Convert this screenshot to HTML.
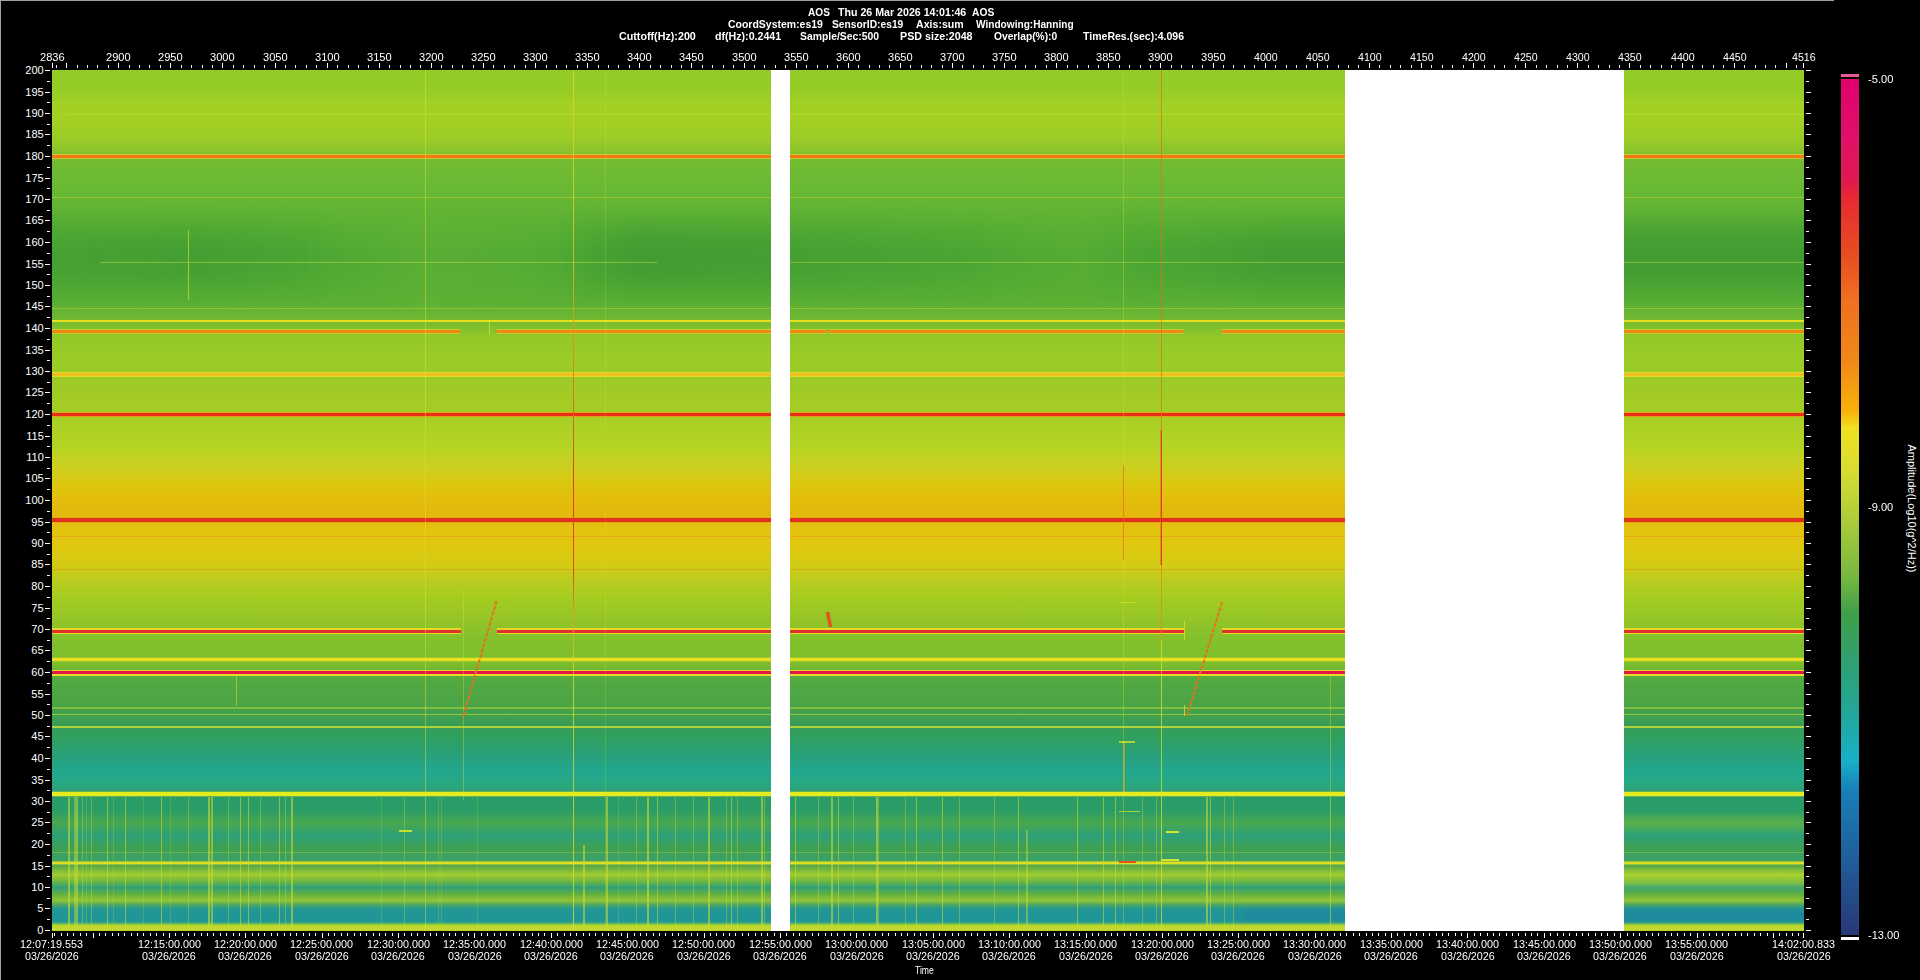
<!DOCTYPE html><html><head><meta charset="utf-8"><style>
*{margin:0;padding:0;box-sizing:border-box}
html,body{width:1920px;height:980px;background:#000;overflow:hidden}
body{position:relative;font-family:"Liberation Sans",sans-serif;color:#fff;font-size:11px}
.a{position:absolute}
.w{position:absolute;background:#fff}
.t{position:absolute;white-space:nowrap;line-height:11px;height:11px;transform-origin:0 0}
.b{font-weight:bold}
</style></head><body><div class="a" style="left:0;top:0;width:1834px;height:1px;background:#a0a0a0"></div>
<div class="a" style="left:0;top:0;width:1px;height:980px;background:#a0a0a0"></div>
<div class="t b" style="left:808.30px;top:7px;transform:scaleX(0.9167)">AOS</div>
<div class="t b" style="left:837.50px;top:7px;transform:scaleX(0.9667)">Thu 26 Mar 2026 14:01:46</div>
<div class="t b" style="left:971.90px;top:7px;transform:scaleX(0.9333)">AOS</div>
<div class="t b" style="left:728.00px;top:19px;transform:scaleX(0.9525)">CoordSystem:es19</div>
<div class="t b" style="left:832.00px;top:19px;transform:scaleX(0.9329)">SensorID:es19</div>
<div class="t b" style="left:916.00px;top:19px;transform:scaleX(0.9633)">Axis:sum</div>
<div class="t b" style="left:976.00px;top:19px;transform:scaleX(0.9189)">Windowing:Hanning</div>
<div class="t b" style="left:619.00px;top:31px;transform:scaleX(0.9747)">Cuttoff(Hz):200</div>
<div class="t b" style="left:715.00px;top:31px;transform:scaleX(0.9662)">df(Hz):0.2441</div>
<div class="t b" style="left:799.60px;top:31px;transform:scaleX(0.9440)">Sample/Sec:500</div>
<div class="t b" style="left:900.03px;top:31px;transform:scaleX(0.9726)">PSD size:2048</div>
<div class="t b" style="left:994.00px;top:31px;transform:scaleX(0.9309)">Overlap(%):0</div>
<div class="t b" style="left:1082.50px;top:31px;transform:scaleX(0.9571)">TimeRes.(sec):4.096</div>
<div class="w" style="left:56px;top:65px;width:1px;height:3px"></div>
<div class="w" style="left:66px;top:63px;width:1px;height:5px"></div>
<div class="w" style="left:77px;top:65px;width:1px;height:3px"></div>
<div class="w" style="left:87px;top:65px;width:1px;height:3px"></div>
<div class="w" style="left:97px;top:65px;width:1px;height:3px"></div>
<div class="w" style="left:108px;top:65px;width:1px;height:3px"></div>
<div class="w" style="left:118px;top:63px;width:1px;height:5px"></div>
<div class="w" style="left:129px;top:65px;width:1px;height:3px"></div>
<div class="w" style="left:139px;top:65px;width:1px;height:3px"></div>
<div class="w" style="left:149px;top:65px;width:1px;height:3px"></div>
<div class="w" style="left:160px;top:65px;width:1px;height:3px"></div>
<div class="w" style="left:170px;top:63px;width:1px;height:5px"></div>
<div class="w" style="left:181px;top:65px;width:1px;height:3px"></div>
<div class="w" style="left:191px;top:65px;width:1px;height:3px"></div>
<div class="w" style="left:202px;top:65px;width:1px;height:3px"></div>
<div class="w" style="left:212px;top:65px;width:1px;height:3px"></div>
<div class="w" style="left:222px;top:63px;width:1px;height:5px"></div>
<div class="w" style="left:233px;top:65px;width:1px;height:3px"></div>
<div class="w" style="left:243px;top:65px;width:1px;height:3px"></div>
<div class="w" style="left:254px;top:65px;width:1px;height:3px"></div>
<div class="w" style="left:264px;top:65px;width:1px;height:3px"></div>
<div class="w" style="left:275px;top:63px;width:1px;height:5px"></div>
<div class="w" style="left:285px;top:65px;width:1px;height:3px"></div>
<div class="w" style="left:295px;top:65px;width:1px;height:3px"></div>
<div class="w" style="left:306px;top:65px;width:1px;height:3px"></div>
<div class="w" style="left:316px;top:65px;width:1px;height:3px"></div>
<div class="w" style="left:327px;top:63px;width:1px;height:5px"></div>
<div class="w" style="left:337px;top:65px;width:1px;height:3px"></div>
<div class="w" style="left:348px;top:65px;width:1px;height:3px"></div>
<div class="w" style="left:358px;top:65px;width:1px;height:3px"></div>
<div class="w" style="left:368px;top:65px;width:1px;height:3px"></div>
<div class="w" style="left:379px;top:63px;width:1px;height:5px"></div>
<div class="w" style="left:389px;top:65px;width:1px;height:3px"></div>
<div class="w" style="left:400px;top:65px;width:1px;height:3px"></div>
<div class="w" style="left:410px;top:65px;width:1px;height:3px"></div>
<div class="w" style="left:420px;top:65px;width:1px;height:3px"></div>
<div class="w" style="left:431px;top:63px;width:1px;height:5px"></div>
<div class="w" style="left:441px;top:65px;width:1px;height:3px"></div>
<div class="w" style="left:452px;top:65px;width:1px;height:3px"></div>
<div class="w" style="left:462px;top:65px;width:1px;height:3px"></div>
<div class="w" style="left:473px;top:65px;width:1px;height:3px"></div>
<div class="w" style="left:483px;top:63px;width:1px;height:5px"></div>
<div class="w" style="left:493px;top:65px;width:1px;height:3px"></div>
<div class="w" style="left:504px;top:65px;width:1px;height:3px"></div>
<div class="w" style="left:514px;top:65px;width:1px;height:3px"></div>
<div class="w" style="left:525px;top:65px;width:1px;height:3px"></div>
<div class="w" style="left:535px;top:63px;width:1px;height:5px"></div>
<div class="w" style="left:546px;top:65px;width:1px;height:3px"></div>
<div class="w" style="left:556px;top:65px;width:1px;height:3px"></div>
<div class="w" style="left:566px;top:65px;width:1px;height:3px"></div>
<div class="w" style="left:577px;top:65px;width:1px;height:3px"></div>
<div class="w" style="left:587px;top:63px;width:1px;height:5px"></div>
<div class="w" style="left:598px;top:65px;width:1px;height:3px"></div>
<div class="w" style="left:608px;top:65px;width:1px;height:3px"></div>
<div class="w" style="left:618px;top:65px;width:1px;height:3px"></div>
<div class="w" style="left:629px;top:65px;width:1px;height:3px"></div>
<div class="w" style="left:639px;top:63px;width:1px;height:5px"></div>
<div class="w" style="left:650px;top:65px;width:1px;height:3px"></div>
<div class="w" style="left:660px;top:65px;width:1px;height:3px"></div>
<div class="w" style="left:671px;top:65px;width:1px;height:3px"></div>
<div class="w" style="left:681px;top:65px;width:1px;height:3px"></div>
<div class="w" style="left:691px;top:63px;width:1px;height:5px"></div>
<div class="w" style="left:702px;top:65px;width:1px;height:3px"></div>
<div class="w" style="left:712px;top:65px;width:1px;height:3px"></div>
<div class="w" style="left:723px;top:65px;width:1px;height:3px"></div>
<div class="w" style="left:733px;top:65px;width:1px;height:3px"></div>
<div class="w" style="left:744px;top:63px;width:1px;height:5px"></div>
<div class="w" style="left:754px;top:65px;width:1px;height:3px"></div>
<div class="w" style="left:764px;top:65px;width:1px;height:3px"></div>
<div class="w" style="left:775px;top:65px;width:1px;height:3px"></div>
<div class="w" style="left:785px;top:65px;width:1px;height:3px"></div>
<div class="w" style="left:796px;top:63px;width:1px;height:5px"></div>
<div class="w" style="left:806px;top:65px;width:1px;height:3px"></div>
<div class="w" style="left:817px;top:65px;width:1px;height:3px"></div>
<div class="w" style="left:827px;top:65px;width:1px;height:3px"></div>
<div class="w" style="left:837px;top:65px;width:1px;height:3px"></div>
<div class="w" style="left:848px;top:63px;width:1px;height:5px"></div>
<div class="w" style="left:858px;top:65px;width:1px;height:3px"></div>
<div class="w" style="left:869px;top:65px;width:1px;height:3px"></div>
<div class="w" style="left:879px;top:65px;width:1px;height:3px"></div>
<div class="w" style="left:889px;top:65px;width:1px;height:3px"></div>
<div class="w" style="left:900px;top:63px;width:1px;height:5px"></div>
<div class="w" style="left:910px;top:65px;width:1px;height:3px"></div>
<div class="w" style="left:921px;top:65px;width:1px;height:3px"></div>
<div class="w" style="left:931px;top:65px;width:1px;height:3px"></div>
<div class="w" style="left:942px;top:65px;width:1px;height:3px"></div>
<div class="w" style="left:952px;top:63px;width:1px;height:5px"></div>
<div class="w" style="left:962px;top:65px;width:1px;height:3px"></div>
<div class="w" style="left:973px;top:65px;width:1px;height:3px"></div>
<div class="w" style="left:983px;top:65px;width:1px;height:3px"></div>
<div class="w" style="left:994px;top:65px;width:1px;height:3px"></div>
<div class="w" style="left:1004px;top:63px;width:1px;height:5px"></div>
<div class="w" style="left:1015px;top:65px;width:1px;height:3px"></div>
<div class="w" style="left:1025px;top:65px;width:1px;height:3px"></div>
<div class="w" style="left:1035px;top:65px;width:1px;height:3px"></div>
<div class="w" style="left:1046px;top:65px;width:1px;height:3px"></div>
<div class="w" style="left:1056px;top:63px;width:1px;height:5px"></div>
<div class="w" style="left:1067px;top:65px;width:1px;height:3px"></div>
<div class="w" style="left:1077px;top:65px;width:1px;height:3px"></div>
<div class="w" style="left:1088px;top:65px;width:1px;height:3px"></div>
<div class="w" style="left:1098px;top:65px;width:1px;height:3px"></div>
<div class="w" style="left:1108px;top:63px;width:1px;height:5px"></div>
<div class="w" style="left:1119px;top:65px;width:1px;height:3px"></div>
<div class="w" style="left:1129px;top:65px;width:1px;height:3px"></div>
<div class="w" style="left:1140px;top:65px;width:1px;height:3px"></div>
<div class="w" style="left:1150px;top:65px;width:1px;height:3px"></div>
<div class="w" style="left:1160px;top:63px;width:1px;height:5px"></div>
<div class="w" style="left:1171px;top:65px;width:1px;height:3px"></div>
<div class="w" style="left:1181px;top:65px;width:1px;height:3px"></div>
<div class="w" style="left:1192px;top:65px;width:1px;height:3px"></div>
<div class="w" style="left:1202px;top:65px;width:1px;height:3px"></div>
<div class="w" style="left:1213px;top:63px;width:1px;height:5px"></div>
<div class="w" style="left:1223px;top:65px;width:1px;height:3px"></div>
<div class="w" style="left:1233px;top:65px;width:1px;height:3px"></div>
<div class="w" style="left:1244px;top:65px;width:1px;height:3px"></div>
<div class="w" style="left:1254px;top:65px;width:1px;height:3px"></div>
<div class="w" style="left:1265px;top:63px;width:1px;height:5px"></div>
<div class="w" style="left:1275px;top:65px;width:1px;height:3px"></div>
<div class="w" style="left:1286px;top:65px;width:1px;height:3px"></div>
<div class="w" style="left:1296px;top:65px;width:1px;height:3px"></div>
<div class="w" style="left:1306px;top:65px;width:1px;height:3px"></div>
<div class="w" style="left:1317px;top:63px;width:1px;height:5px"></div>
<div class="w" style="left:1327px;top:65px;width:1px;height:3px"></div>
<div class="w" style="left:1338px;top:65px;width:1px;height:3px"></div>
<div class="w" style="left:1348px;top:65px;width:1px;height:3px"></div>
<div class="w" style="left:1358px;top:65px;width:1px;height:3px"></div>
<div class="w" style="left:1369px;top:63px;width:1px;height:5px"></div>
<div class="w" style="left:1379px;top:65px;width:1px;height:3px"></div>
<div class="w" style="left:1390px;top:65px;width:1px;height:3px"></div>
<div class="w" style="left:1400px;top:65px;width:1px;height:3px"></div>
<div class="w" style="left:1411px;top:65px;width:1px;height:3px"></div>
<div class="w" style="left:1421px;top:63px;width:1px;height:5px"></div>
<div class="w" style="left:1431px;top:65px;width:1px;height:3px"></div>
<div class="w" style="left:1442px;top:65px;width:1px;height:3px"></div>
<div class="w" style="left:1452px;top:65px;width:1px;height:3px"></div>
<div class="w" style="left:1463px;top:65px;width:1px;height:3px"></div>
<div class="w" style="left:1473px;top:63px;width:1px;height:5px"></div>
<div class="w" style="left:1484px;top:65px;width:1px;height:3px"></div>
<div class="w" style="left:1494px;top:65px;width:1px;height:3px"></div>
<div class="w" style="left:1504px;top:65px;width:1px;height:3px"></div>
<div class="w" style="left:1515px;top:65px;width:1px;height:3px"></div>
<div class="w" style="left:1525px;top:63px;width:1px;height:5px"></div>
<div class="w" style="left:1536px;top:65px;width:1px;height:3px"></div>
<div class="w" style="left:1546px;top:65px;width:1px;height:3px"></div>
<div class="w" style="left:1557px;top:65px;width:1px;height:3px"></div>
<div class="w" style="left:1567px;top:65px;width:1px;height:3px"></div>
<div class="w" style="left:1577px;top:63px;width:1px;height:5px"></div>
<div class="w" style="left:1588px;top:65px;width:1px;height:3px"></div>
<div class="w" style="left:1598px;top:65px;width:1px;height:3px"></div>
<div class="w" style="left:1609px;top:65px;width:1px;height:3px"></div>
<div class="w" style="left:1619px;top:65px;width:1px;height:3px"></div>
<div class="w" style="left:1629px;top:63px;width:1px;height:5px"></div>
<div class="w" style="left:1640px;top:65px;width:1px;height:3px"></div>
<div class="w" style="left:1650px;top:65px;width:1px;height:3px"></div>
<div class="w" style="left:1661px;top:65px;width:1px;height:3px"></div>
<div class="w" style="left:1671px;top:65px;width:1px;height:3px"></div>
<div class="w" style="left:1682px;top:63px;width:1px;height:5px"></div>
<div class="w" style="left:1692px;top:65px;width:1px;height:3px"></div>
<div class="w" style="left:1702px;top:65px;width:1px;height:3px"></div>
<div class="w" style="left:1713px;top:65px;width:1px;height:3px"></div>
<div class="w" style="left:1723px;top:65px;width:1px;height:3px"></div>
<div class="w" style="left:1734px;top:63px;width:1px;height:5px"></div>
<div class="w" style="left:1744px;top:65px;width:1px;height:3px"></div>
<div class="w" style="left:1755px;top:65px;width:1px;height:3px"></div>
<div class="w" style="left:1765px;top:65px;width:1px;height:3px"></div>
<div class="w" style="left:1775px;top:65px;width:1px;height:3px"></div>
<div class="w" style="left:1786px;top:63px;width:1px;height:5px"></div>
<div class="w" style="left:1796px;top:65px;width:1px;height:3px"></div>
<div class="w" style="left:52px;top:63px;width:1px;height:5px"></div>
<div class="w" style="left:1803px;top:63px;width:1px;height:5px"></div>
<div class="t" style="left:39.89px;top:52px;transform:scaleX(1.0087)">2836</div>
<div class="t" style="left:105.89px;top:52px;transform:scaleX(1.0087)">2900</div>
<div class="t" style="left:157.89px;top:52px;transform:scaleX(1.0087)">2950</div>
<div class="t" style="left:209.89px;top:52px;transform:scaleX(1.0087)">3000</div>
<div class="t" style="left:262.89px;top:52px;transform:scaleX(1.0087)">3050</div>
<div class="t" style="left:314.89px;top:52px;transform:scaleX(1.0087)">3100</div>
<div class="t" style="left:366.89px;top:52px;transform:scaleX(1.0087)">3150</div>
<div class="t" style="left:418.89px;top:52px;transform:scaleX(1.0087)">3200</div>
<div class="t" style="left:470.89px;top:52px;transform:scaleX(1.0087)">3250</div>
<div class="t" style="left:522.89px;top:52px;transform:scaleX(1.0087)">3300</div>
<div class="t" style="left:574.89px;top:52px;transform:scaleX(1.0087)">3350</div>
<div class="t" style="left:626.89px;top:52px;transform:scaleX(1.0087)">3400</div>
<div class="t" style="left:678.89px;top:52px;transform:scaleX(1.0087)">3450</div>
<div class="t" style="left:731.89px;top:52px;transform:scaleX(1.0087)">3500</div>
<div class="t" style="left:783.89px;top:52px;transform:scaleX(1.0087)">3550</div>
<div class="t" style="left:835.89px;top:52px;transform:scaleX(1.0087)">3600</div>
<div class="t" style="left:887.89px;top:52px;transform:scaleX(1.0087)">3650</div>
<div class="t" style="left:939.89px;top:52px;transform:scaleX(1.0087)">3700</div>
<div class="t" style="left:991.89px;top:52px;transform:scaleX(1.0087)">3750</div>
<div class="t" style="left:1043.89px;top:52px;transform:scaleX(1.0087)">3800</div>
<div class="t" style="left:1095.89px;top:52px;transform:scaleX(1.0087)">3850</div>
<div class="t" style="left:1147.89px;top:52px;transform:scaleX(1.0087)">3900</div>
<div class="t" style="left:1200.89px;top:52px;transform:scaleX(1.0087)">3950</div>
<div class="t" style="left:1253.90px;top:52px;transform:scaleX(0.9667)">4000</div>
<div class="t" style="left:1305.90px;top:52px;transform:scaleX(0.9667)">4050</div>
<div class="t" style="left:1357.90px;top:52px;transform:scaleX(0.9667)">4100</div>
<div class="t" style="left:1409.90px;top:52px;transform:scaleX(0.9667)">4150</div>
<div class="t" style="left:1461.90px;top:52px;transform:scaleX(0.9667)">4200</div>
<div class="t" style="left:1513.90px;top:52px;transform:scaleX(0.9667)">4250</div>
<div class="t" style="left:1565.90px;top:52px;transform:scaleX(0.9667)">4300</div>
<div class="t" style="left:1617.90px;top:52px;transform:scaleX(0.9667)">4350</div>
<div class="t" style="left:1670.90px;top:52px;transform:scaleX(0.9667)">4400</div>
<div class="t" style="left:1722.90px;top:52px;transform:scaleX(0.9667)">4450</div>
<div class="t" style="left:1791.90px;top:52px;transform:scaleX(0.9667)">4516</div>
<div class="w" style="left:45px;top:930px;width:5px;height:1px"></div>
<div class="w" style="left:1806px;top:930px;width:5px;height:1px"></div>
<div class="t" style="left:37.30px;top:925px">0</div>
<div class="w" style="left:47px;top:919px;width:3px;height:1px"></div>
<div class="w" style="left:1806px;top:919px;width:3px;height:1px"></div>
<div class="w" style="left:45px;top:908px;width:5px;height:1px"></div>
<div class="w" style="left:1806px;top:908px;width:5px;height:1px"></div>
<div class="t" style="left:37.30px;top:903px">5</div>
<div class="w" style="left:47px;top:898px;width:3px;height:1px"></div>
<div class="w" style="left:1806px;top:898px;width:3px;height:1px"></div>
<div class="w" style="left:45px;top:887px;width:5px;height:1px"></div>
<div class="w" style="left:1806px;top:887px;width:5px;height:1px"></div>
<div class="t" style="left:31.30px;top:882px">10</div>
<div class="w" style="left:47px;top:876px;width:3px;height:1px"></div>
<div class="w" style="left:1806px;top:876px;width:3px;height:1px"></div>
<div class="w" style="left:45px;top:866px;width:5px;height:1px"></div>
<div class="w" style="left:1806px;top:866px;width:5px;height:1px"></div>
<div class="t" style="left:31.30px;top:861px">15</div>
<div class="w" style="left:47px;top:855px;width:3px;height:1px"></div>
<div class="w" style="left:1806px;top:855px;width:3px;height:1px"></div>
<div class="w" style="left:45px;top:844px;width:5px;height:1px"></div>
<div class="w" style="left:1806px;top:844px;width:5px;height:1px"></div>
<div class="t" style="left:31.30px;top:839px">20</div>
<div class="w" style="left:47px;top:833px;width:3px;height:1px"></div>
<div class="w" style="left:1806px;top:833px;width:3px;height:1px"></div>
<div class="w" style="left:45px;top:822px;width:5px;height:1px"></div>
<div class="w" style="left:1806px;top:822px;width:5px;height:1px"></div>
<div class="t" style="left:31.30px;top:817px">25</div>
<div class="w" style="left:47px;top:812px;width:3px;height:1px"></div>
<div class="w" style="left:1806px;top:812px;width:3px;height:1px"></div>
<div class="w" style="left:45px;top:801px;width:5px;height:1px"></div>
<div class="w" style="left:1806px;top:801px;width:5px;height:1px"></div>
<div class="t" style="left:31.30px;top:796px">30</div>
<div class="w" style="left:47px;top:790px;width:3px;height:1px"></div>
<div class="w" style="left:1806px;top:790px;width:3px;height:1px"></div>
<div class="w" style="left:45px;top:780px;width:5px;height:1px"></div>
<div class="w" style="left:1806px;top:780px;width:5px;height:1px"></div>
<div class="t" style="left:31.30px;top:775px">35</div>
<div class="w" style="left:47px;top:769px;width:3px;height:1px"></div>
<div class="w" style="left:1806px;top:769px;width:3px;height:1px"></div>
<div class="w" style="left:45px;top:758px;width:5px;height:1px"></div>
<div class="w" style="left:1806px;top:758px;width:5px;height:1px"></div>
<div class="t" style="left:31.30px;top:753px">40</div>
<div class="w" style="left:47px;top:747px;width:3px;height:1px"></div>
<div class="w" style="left:1806px;top:747px;width:3px;height:1px"></div>
<div class="w" style="left:45px;top:736px;width:5px;height:1px"></div>
<div class="w" style="left:1806px;top:736px;width:5px;height:1px"></div>
<div class="t" style="left:31.30px;top:731px">45</div>
<div class="w" style="left:47px;top:726px;width:3px;height:1px"></div>
<div class="w" style="left:1806px;top:726px;width:3px;height:1px"></div>
<div class="w" style="left:45px;top:715px;width:5px;height:1px"></div>
<div class="w" style="left:1806px;top:715px;width:5px;height:1px"></div>
<div class="t" style="left:31.30px;top:710px">50</div>
<div class="w" style="left:47px;top:704px;width:3px;height:1px"></div>
<div class="w" style="left:1806px;top:704px;width:3px;height:1px"></div>
<div class="w" style="left:45px;top:694px;width:5px;height:1px"></div>
<div class="w" style="left:1806px;top:694px;width:5px;height:1px"></div>
<div class="t" style="left:31.30px;top:689px">55</div>
<div class="w" style="left:47px;top:683px;width:3px;height:1px"></div>
<div class="w" style="left:1806px;top:683px;width:3px;height:1px"></div>
<div class="w" style="left:45px;top:672px;width:5px;height:1px"></div>
<div class="w" style="left:1806px;top:672px;width:5px;height:1px"></div>
<div class="t" style="left:31.30px;top:667px">60</div>
<div class="w" style="left:47px;top:661px;width:3px;height:1px"></div>
<div class="w" style="left:1806px;top:661px;width:3px;height:1px"></div>
<div class="w" style="left:45px;top:650px;width:5px;height:1px"></div>
<div class="w" style="left:1806px;top:650px;width:5px;height:1px"></div>
<div class="t" style="left:31.30px;top:645px">65</div>
<div class="w" style="left:47px;top:640px;width:3px;height:1px"></div>
<div class="w" style="left:1806px;top:640px;width:3px;height:1px"></div>
<div class="w" style="left:45px;top:629px;width:5px;height:1px"></div>
<div class="w" style="left:1806px;top:629px;width:5px;height:1px"></div>
<div class="t" style="left:31.30px;top:624px">70</div>
<div class="w" style="left:47px;top:618px;width:3px;height:1px"></div>
<div class="w" style="left:1806px;top:618px;width:3px;height:1px"></div>
<div class="w" style="left:45px;top:608px;width:5px;height:1px"></div>
<div class="w" style="left:1806px;top:608px;width:5px;height:1px"></div>
<div class="t" style="left:31.30px;top:603px">75</div>
<div class="w" style="left:47px;top:597px;width:3px;height:1px"></div>
<div class="w" style="left:1806px;top:597px;width:3px;height:1px"></div>
<div class="w" style="left:45px;top:586px;width:5px;height:1px"></div>
<div class="w" style="left:1806px;top:586px;width:5px;height:1px"></div>
<div class="t" style="left:31.30px;top:581px">80</div>
<div class="w" style="left:47px;top:575px;width:3px;height:1px"></div>
<div class="w" style="left:1806px;top:575px;width:3px;height:1px"></div>
<div class="w" style="left:45px;top:564px;width:5px;height:1px"></div>
<div class="w" style="left:1806px;top:564px;width:5px;height:1px"></div>
<div class="t" style="left:31.30px;top:559px">85</div>
<div class="w" style="left:47px;top:554px;width:3px;height:1px"></div>
<div class="w" style="left:1806px;top:554px;width:3px;height:1px"></div>
<div class="w" style="left:45px;top:543px;width:5px;height:1px"></div>
<div class="w" style="left:1806px;top:543px;width:5px;height:1px"></div>
<div class="t" style="left:31.30px;top:538px">90</div>
<div class="w" style="left:47px;top:532px;width:3px;height:1px"></div>
<div class="w" style="left:1806px;top:532px;width:3px;height:1px"></div>
<div class="w" style="left:45px;top:522px;width:5px;height:1px"></div>
<div class="w" style="left:1806px;top:522px;width:5px;height:1px"></div>
<div class="t" style="left:31.30px;top:517px">95</div>
<div class="w" style="left:47px;top:511px;width:3px;height:1px"></div>
<div class="w" style="left:1806px;top:511px;width:3px;height:1px"></div>
<div class="w" style="left:45px;top:500px;width:5px;height:1px"></div>
<div class="w" style="left:1806px;top:500px;width:5px;height:1px"></div>
<div class="t" style="left:25.30px;top:495px">100</div>
<div class="w" style="left:47px;top:489px;width:3px;height:1px"></div>
<div class="w" style="left:1806px;top:489px;width:3px;height:1px"></div>
<div class="w" style="left:45px;top:478px;width:5px;height:1px"></div>
<div class="w" style="left:1806px;top:478px;width:5px;height:1px"></div>
<div class="t" style="left:25.30px;top:473px">105</div>
<div class="w" style="left:47px;top:468px;width:3px;height:1px"></div>
<div class="w" style="left:1806px;top:468px;width:3px;height:1px"></div>
<div class="w" style="left:45px;top:457px;width:5px;height:1px"></div>
<div class="w" style="left:1806px;top:457px;width:5px;height:1px"></div>
<div class="t" style="left:26.30px;top:452px">110</div>
<div class="w" style="left:47px;top:446px;width:3px;height:1px"></div>
<div class="w" style="left:1806px;top:446px;width:3px;height:1px"></div>
<div class="w" style="left:45px;top:436px;width:5px;height:1px"></div>
<div class="w" style="left:1806px;top:436px;width:5px;height:1px"></div>
<div class="t" style="left:26.30px;top:431px">115</div>
<div class="w" style="left:47px;top:425px;width:3px;height:1px"></div>
<div class="w" style="left:1806px;top:425px;width:3px;height:1px"></div>
<div class="w" style="left:45px;top:414px;width:5px;height:1px"></div>
<div class="w" style="left:1806px;top:414px;width:5px;height:1px"></div>
<div class="t" style="left:25.30px;top:409px">120</div>
<div class="w" style="left:47px;top:403px;width:3px;height:1px"></div>
<div class="w" style="left:1806px;top:403px;width:3px;height:1px"></div>
<div class="w" style="left:45px;top:392px;width:5px;height:1px"></div>
<div class="w" style="left:1806px;top:392px;width:5px;height:1px"></div>
<div class="t" style="left:25.30px;top:387px">125</div>
<div class="w" style="left:47px;top:382px;width:3px;height:1px"></div>
<div class="w" style="left:1806px;top:382px;width:3px;height:1px"></div>
<div class="w" style="left:45px;top:371px;width:5px;height:1px"></div>
<div class="w" style="left:1806px;top:371px;width:5px;height:1px"></div>
<div class="t" style="left:25.30px;top:366px">130</div>
<div class="w" style="left:47px;top:360px;width:3px;height:1px"></div>
<div class="w" style="left:1806px;top:360px;width:3px;height:1px"></div>
<div class="w" style="left:45px;top:350px;width:5px;height:1px"></div>
<div class="w" style="left:1806px;top:350px;width:5px;height:1px"></div>
<div class="t" style="left:25.30px;top:345px">135</div>
<div class="w" style="left:47px;top:339px;width:3px;height:1px"></div>
<div class="w" style="left:1806px;top:339px;width:3px;height:1px"></div>
<div class="w" style="left:45px;top:328px;width:5px;height:1px"></div>
<div class="w" style="left:1806px;top:328px;width:5px;height:1px"></div>
<div class="t" style="left:25.30px;top:323px">140</div>
<div class="w" style="left:47px;top:317px;width:3px;height:1px"></div>
<div class="w" style="left:1806px;top:317px;width:3px;height:1px"></div>
<div class="w" style="left:45px;top:306px;width:5px;height:1px"></div>
<div class="w" style="left:1806px;top:306px;width:5px;height:1px"></div>
<div class="t" style="left:25.30px;top:301px">145</div>
<div class="w" style="left:47px;top:296px;width:3px;height:1px"></div>
<div class="w" style="left:1806px;top:296px;width:3px;height:1px"></div>
<div class="w" style="left:45px;top:285px;width:5px;height:1px"></div>
<div class="w" style="left:1806px;top:285px;width:5px;height:1px"></div>
<div class="t" style="left:25.30px;top:280px">150</div>
<div class="w" style="left:47px;top:274px;width:3px;height:1px"></div>
<div class="w" style="left:1806px;top:274px;width:3px;height:1px"></div>
<div class="w" style="left:45px;top:264px;width:5px;height:1px"></div>
<div class="w" style="left:1806px;top:264px;width:5px;height:1px"></div>
<div class="t" style="left:25.30px;top:259px">155</div>
<div class="w" style="left:47px;top:253px;width:3px;height:1px"></div>
<div class="w" style="left:1806px;top:253px;width:3px;height:1px"></div>
<div class="w" style="left:45px;top:242px;width:5px;height:1px"></div>
<div class="w" style="left:1806px;top:242px;width:5px;height:1px"></div>
<div class="t" style="left:25.30px;top:237px">160</div>
<div class="w" style="left:47px;top:231px;width:3px;height:1px"></div>
<div class="w" style="left:1806px;top:231px;width:3px;height:1px"></div>
<div class="w" style="left:45px;top:220px;width:5px;height:1px"></div>
<div class="w" style="left:1806px;top:220px;width:5px;height:1px"></div>
<div class="t" style="left:25.30px;top:215px">165</div>
<div class="w" style="left:47px;top:210px;width:3px;height:1px"></div>
<div class="w" style="left:1806px;top:210px;width:3px;height:1px"></div>
<div class="w" style="left:45px;top:199px;width:5px;height:1px"></div>
<div class="w" style="left:1806px;top:199px;width:5px;height:1px"></div>
<div class="t" style="left:25.30px;top:194px">170</div>
<div class="w" style="left:47px;top:188px;width:3px;height:1px"></div>
<div class="w" style="left:1806px;top:188px;width:3px;height:1px"></div>
<div class="w" style="left:45px;top:178px;width:5px;height:1px"></div>
<div class="w" style="left:1806px;top:178px;width:5px;height:1px"></div>
<div class="t" style="left:25.30px;top:173px">175</div>
<div class="w" style="left:47px;top:167px;width:3px;height:1px"></div>
<div class="w" style="left:1806px;top:167px;width:3px;height:1px"></div>
<div class="w" style="left:45px;top:156px;width:5px;height:1px"></div>
<div class="w" style="left:1806px;top:156px;width:5px;height:1px"></div>
<div class="t" style="left:25.30px;top:151px">180</div>
<div class="w" style="left:47px;top:145px;width:3px;height:1px"></div>
<div class="w" style="left:1806px;top:145px;width:3px;height:1px"></div>
<div class="w" style="left:45px;top:134px;width:5px;height:1px"></div>
<div class="w" style="left:1806px;top:134px;width:5px;height:1px"></div>
<div class="t" style="left:25.30px;top:129px">185</div>
<div class="w" style="left:47px;top:124px;width:3px;height:1px"></div>
<div class="w" style="left:1806px;top:124px;width:3px;height:1px"></div>
<div class="w" style="left:45px;top:113px;width:5px;height:1px"></div>
<div class="w" style="left:1806px;top:113px;width:5px;height:1px"></div>
<div class="t" style="left:25.30px;top:108px">190</div>
<div class="w" style="left:47px;top:102px;width:3px;height:1px"></div>
<div class="w" style="left:1806px;top:102px;width:3px;height:1px"></div>
<div class="w" style="left:45px;top:92px;width:5px;height:1px"></div>
<div class="w" style="left:1806px;top:92px;width:5px;height:1px"></div>
<div class="t" style="left:25.30px;top:87px">195</div>
<div class="w" style="left:47px;top:81px;width:3px;height:1px"></div>
<div class="w" style="left:1806px;top:81px;width:3px;height:1px"></div>
<div class="w" style="left:45px;top:70px;width:5px;height:1px"></div>
<div class="w" style="left:1806px;top:70px;width:5px;height:1px"></div>
<div class="t" style="left:25.30px;top:65px">200</div>
<div class="w" style="left:54px;top:933px;width:1px;height:3px"></div>
<div class="w" style="left:61px;top:933px;width:1px;height:3px"></div>
<div class="w" style="left:67px;top:933px;width:1px;height:3px"></div>
<div class="w" style="left:73px;top:933px;width:1px;height:3px"></div>
<div class="w" style="left:80px;top:933px;width:1px;height:3px"></div>
<div class="w" style="left:86px;top:933px;width:1px;height:3px"></div>
<div class="w" style="left:93px;top:933px;width:1px;height:5px"></div>
<div class="w" style="left:99px;top:933px;width:1px;height:3px"></div>
<div class="w" style="left:105px;top:933px;width:1px;height:3px"></div>
<div class="w" style="left:112px;top:933px;width:1px;height:3px"></div>
<div class="w" style="left:118px;top:933px;width:1px;height:3px"></div>
<div class="w" style="left:124px;top:933px;width:1px;height:3px"></div>
<div class="w" style="left:131px;top:933px;width:1px;height:3px"></div>
<div class="w" style="left:137px;top:933px;width:1px;height:3px"></div>
<div class="w" style="left:143px;top:933px;width:1px;height:3px"></div>
<div class="w" style="left:150px;top:933px;width:1px;height:3px"></div>
<div class="w" style="left:156px;top:933px;width:1px;height:3px"></div>
<div class="w" style="left:163px;top:933px;width:1px;height:3px"></div>
<div class="w" style="left:169px;top:933px;width:1px;height:5px"></div>
<div class="w" style="left:175px;top:933px;width:1px;height:3px"></div>
<div class="w" style="left:182px;top:933px;width:1px;height:3px"></div>
<div class="w" style="left:188px;top:933px;width:1px;height:3px"></div>
<div class="w" style="left:194px;top:933px;width:1px;height:3px"></div>
<div class="w" style="left:201px;top:933px;width:1px;height:3px"></div>
<div class="w" style="left:207px;top:933px;width:1px;height:3px"></div>
<div class="w" style="left:213px;top:933px;width:1px;height:3px"></div>
<div class="w" style="left:220px;top:933px;width:1px;height:3px"></div>
<div class="w" style="left:226px;top:933px;width:1px;height:3px"></div>
<div class="w" style="left:233px;top:933px;width:1px;height:3px"></div>
<div class="w" style="left:239px;top:933px;width:1px;height:3px"></div>
<div class="w" style="left:245px;top:933px;width:1px;height:5px"></div>
<div class="w" style="left:252px;top:933px;width:1px;height:3px"></div>
<div class="w" style="left:258px;top:933px;width:1px;height:3px"></div>
<div class="w" style="left:264px;top:933px;width:1px;height:3px"></div>
<div class="w" style="left:271px;top:933px;width:1px;height:3px"></div>
<div class="w" style="left:277px;top:933px;width:1px;height:3px"></div>
<div class="w" style="left:284px;top:933px;width:1px;height:3px"></div>
<div class="w" style="left:290px;top:933px;width:1px;height:3px"></div>
<div class="w" style="left:296px;top:933px;width:1px;height:3px"></div>
<div class="w" style="left:303px;top:933px;width:1px;height:3px"></div>
<div class="w" style="left:309px;top:933px;width:1px;height:3px"></div>
<div class="w" style="left:315px;top:933px;width:1px;height:3px"></div>
<div class="w" style="left:322px;top:933px;width:1px;height:5px"></div>
<div class="w" style="left:328px;top:933px;width:1px;height:3px"></div>
<div class="w" style="left:334px;top:933px;width:1px;height:3px"></div>
<div class="w" style="left:341px;top:933px;width:1px;height:3px"></div>
<div class="w" style="left:347px;top:933px;width:1px;height:3px"></div>
<div class="w" style="left:354px;top:933px;width:1px;height:3px"></div>
<div class="w" style="left:360px;top:933px;width:1px;height:3px"></div>
<div class="w" style="left:366px;top:933px;width:1px;height:3px"></div>
<div class="w" style="left:373px;top:933px;width:1px;height:3px"></div>
<div class="w" style="left:379px;top:933px;width:1px;height:3px"></div>
<div class="w" style="left:385px;top:933px;width:1px;height:3px"></div>
<div class="w" style="left:392px;top:933px;width:1px;height:3px"></div>
<div class="w" style="left:398px;top:933px;width:1px;height:5px"></div>
<div class="w" style="left:404px;top:933px;width:1px;height:3px"></div>
<div class="w" style="left:411px;top:933px;width:1px;height:3px"></div>
<div class="w" style="left:417px;top:933px;width:1px;height:3px"></div>
<div class="w" style="left:424px;top:933px;width:1px;height:3px"></div>
<div class="w" style="left:430px;top:933px;width:1px;height:3px"></div>
<div class="w" style="left:436px;top:933px;width:1px;height:3px"></div>
<div class="w" style="left:443px;top:933px;width:1px;height:3px"></div>
<div class="w" style="left:449px;top:933px;width:1px;height:3px"></div>
<div class="w" style="left:455px;top:933px;width:1px;height:3px"></div>
<div class="w" style="left:462px;top:933px;width:1px;height:3px"></div>
<div class="w" style="left:468px;top:933px;width:1px;height:3px"></div>
<div class="w" style="left:474px;top:933px;width:1px;height:5px"></div>
<div class="w" style="left:481px;top:933px;width:1px;height:3px"></div>
<div class="w" style="left:487px;top:933px;width:1px;height:3px"></div>
<div class="w" style="left:494px;top:933px;width:1px;height:3px"></div>
<div class="w" style="left:500px;top:933px;width:1px;height:3px"></div>
<div class="w" style="left:506px;top:933px;width:1px;height:3px"></div>
<div class="w" style="left:513px;top:933px;width:1px;height:3px"></div>
<div class="w" style="left:519px;top:933px;width:1px;height:3px"></div>
<div class="w" style="left:525px;top:933px;width:1px;height:3px"></div>
<div class="w" style="left:532px;top:933px;width:1px;height:3px"></div>
<div class="w" style="left:538px;top:933px;width:1px;height:3px"></div>
<div class="w" style="left:544px;top:933px;width:1px;height:3px"></div>
<div class="w" style="left:551px;top:933px;width:1px;height:5px"></div>
<div class="w" style="left:557px;top:933px;width:1px;height:3px"></div>
<div class="w" style="left:564px;top:933px;width:1px;height:3px"></div>
<div class="w" style="left:570px;top:933px;width:1px;height:3px"></div>
<div class="w" style="left:576px;top:933px;width:1px;height:3px"></div>
<div class="w" style="left:583px;top:933px;width:1px;height:3px"></div>
<div class="w" style="left:589px;top:933px;width:1px;height:3px"></div>
<div class="w" style="left:595px;top:933px;width:1px;height:3px"></div>
<div class="w" style="left:602px;top:933px;width:1px;height:3px"></div>
<div class="w" style="left:608px;top:933px;width:1px;height:3px"></div>
<div class="w" style="left:614px;top:933px;width:1px;height:3px"></div>
<div class="w" style="left:621px;top:933px;width:1px;height:3px"></div>
<div class="w" style="left:627px;top:933px;width:1px;height:5px"></div>
<div class="w" style="left:634px;top:933px;width:1px;height:3px"></div>
<div class="w" style="left:640px;top:933px;width:1px;height:3px"></div>
<div class="w" style="left:646px;top:933px;width:1px;height:3px"></div>
<div class="w" style="left:653px;top:933px;width:1px;height:3px"></div>
<div class="w" style="left:659px;top:933px;width:1px;height:3px"></div>
<div class="w" style="left:665px;top:933px;width:1px;height:3px"></div>
<div class="w" style="left:672px;top:933px;width:1px;height:3px"></div>
<div class="w" style="left:678px;top:933px;width:1px;height:3px"></div>
<div class="w" style="left:685px;top:933px;width:1px;height:3px"></div>
<div class="w" style="left:691px;top:933px;width:1px;height:3px"></div>
<div class="w" style="left:697px;top:933px;width:1px;height:3px"></div>
<div class="w" style="left:704px;top:933px;width:1px;height:5px"></div>
<div class="w" style="left:710px;top:933px;width:1px;height:3px"></div>
<div class="w" style="left:716px;top:933px;width:1px;height:3px"></div>
<div class="w" style="left:723px;top:933px;width:1px;height:3px"></div>
<div class="w" style="left:729px;top:933px;width:1px;height:3px"></div>
<div class="w" style="left:735px;top:933px;width:1px;height:3px"></div>
<div class="w" style="left:742px;top:933px;width:1px;height:3px"></div>
<div class="w" style="left:748px;top:933px;width:1px;height:3px"></div>
<div class="w" style="left:755px;top:933px;width:1px;height:3px"></div>
<div class="w" style="left:761px;top:933px;width:1px;height:3px"></div>
<div class="w" style="left:767px;top:933px;width:1px;height:3px"></div>
<div class="w" style="left:774px;top:933px;width:1px;height:3px"></div>
<div class="w" style="left:780px;top:933px;width:1px;height:5px"></div>
<div class="w" style="left:786px;top:933px;width:1px;height:3px"></div>
<div class="w" style="left:793px;top:933px;width:1px;height:3px"></div>
<div class="w" style="left:799px;top:933px;width:1px;height:3px"></div>
<div class="w" style="left:805px;top:933px;width:1px;height:3px"></div>
<div class="w" style="left:812px;top:933px;width:1px;height:3px"></div>
<div class="w" style="left:818px;top:933px;width:1px;height:3px"></div>
<div class="w" style="left:825px;top:933px;width:1px;height:3px"></div>
<div class="w" style="left:831px;top:933px;width:1px;height:3px"></div>
<div class="w" style="left:837px;top:933px;width:1px;height:3px"></div>
<div class="w" style="left:844px;top:933px;width:1px;height:3px"></div>
<div class="w" style="left:850px;top:933px;width:1px;height:3px"></div>
<div class="w" style="left:856px;top:933px;width:1px;height:5px"></div>
<div class="w" style="left:863px;top:933px;width:1px;height:3px"></div>
<div class="w" style="left:869px;top:933px;width:1px;height:3px"></div>
<div class="w" style="left:875px;top:933px;width:1px;height:3px"></div>
<div class="w" style="left:882px;top:933px;width:1px;height:3px"></div>
<div class="w" style="left:888px;top:933px;width:1px;height:3px"></div>
<div class="w" style="left:895px;top:933px;width:1px;height:3px"></div>
<div class="w" style="left:901px;top:933px;width:1px;height:3px"></div>
<div class="w" style="left:907px;top:933px;width:1px;height:3px"></div>
<div class="w" style="left:914px;top:933px;width:1px;height:3px"></div>
<div class="w" style="left:920px;top:933px;width:1px;height:3px"></div>
<div class="w" style="left:926px;top:933px;width:1px;height:3px"></div>
<div class="w" style="left:933px;top:933px;width:1px;height:5px"></div>
<div class="w" style="left:939px;top:933px;width:1px;height:3px"></div>
<div class="w" style="left:945px;top:933px;width:1px;height:3px"></div>
<div class="w" style="left:952px;top:933px;width:1px;height:3px"></div>
<div class="w" style="left:958px;top:933px;width:1px;height:3px"></div>
<div class="w" style="left:965px;top:933px;width:1px;height:3px"></div>
<div class="w" style="left:971px;top:933px;width:1px;height:3px"></div>
<div class="w" style="left:977px;top:933px;width:1px;height:3px"></div>
<div class="w" style="left:984px;top:933px;width:1px;height:3px"></div>
<div class="w" style="left:990px;top:933px;width:1px;height:3px"></div>
<div class="w" style="left:996px;top:933px;width:1px;height:3px"></div>
<div class="w" style="left:1003px;top:933px;width:1px;height:3px"></div>
<div class="w" style="left:1009px;top:933px;width:1px;height:5px"></div>
<div class="w" style="left:1015px;top:933px;width:1px;height:3px"></div>
<div class="w" style="left:1022px;top:933px;width:1px;height:3px"></div>
<div class="w" style="left:1028px;top:933px;width:1px;height:3px"></div>
<div class="w" style="left:1035px;top:933px;width:1px;height:3px"></div>
<div class="w" style="left:1041px;top:933px;width:1px;height:3px"></div>
<div class="w" style="left:1047px;top:933px;width:1px;height:3px"></div>
<div class="w" style="left:1054px;top:933px;width:1px;height:3px"></div>
<div class="w" style="left:1060px;top:933px;width:1px;height:3px"></div>
<div class="w" style="left:1066px;top:933px;width:1px;height:3px"></div>
<div class="w" style="left:1073px;top:933px;width:1px;height:3px"></div>
<div class="w" style="left:1079px;top:933px;width:1px;height:3px"></div>
<div class="w" style="left:1086px;top:933px;width:1px;height:5px"></div>
<div class="w" style="left:1092px;top:933px;width:1px;height:3px"></div>
<div class="w" style="left:1098px;top:933px;width:1px;height:3px"></div>
<div class="w" style="left:1105px;top:933px;width:1px;height:3px"></div>
<div class="w" style="left:1111px;top:933px;width:1px;height:3px"></div>
<div class="w" style="left:1117px;top:933px;width:1px;height:3px"></div>
<div class="w" style="left:1124px;top:933px;width:1px;height:3px"></div>
<div class="w" style="left:1130px;top:933px;width:1px;height:3px"></div>
<div class="w" style="left:1136px;top:933px;width:1px;height:3px"></div>
<div class="w" style="left:1143px;top:933px;width:1px;height:3px"></div>
<div class="w" style="left:1149px;top:933px;width:1px;height:3px"></div>
<div class="w" style="left:1156px;top:933px;width:1px;height:3px"></div>
<div class="w" style="left:1162px;top:933px;width:1px;height:5px"></div>
<div class="w" style="left:1168px;top:933px;width:1px;height:3px"></div>
<div class="w" style="left:1175px;top:933px;width:1px;height:3px"></div>
<div class="w" style="left:1181px;top:933px;width:1px;height:3px"></div>
<div class="w" style="left:1187px;top:933px;width:1px;height:3px"></div>
<div class="w" style="left:1194px;top:933px;width:1px;height:3px"></div>
<div class="w" style="left:1200px;top:933px;width:1px;height:3px"></div>
<div class="w" style="left:1206px;top:933px;width:1px;height:3px"></div>
<div class="w" style="left:1213px;top:933px;width:1px;height:3px"></div>
<div class="w" style="left:1219px;top:933px;width:1px;height:3px"></div>
<div class="w" style="left:1226px;top:933px;width:1px;height:3px"></div>
<div class="w" style="left:1232px;top:933px;width:1px;height:3px"></div>
<div class="w" style="left:1238px;top:933px;width:1px;height:5px"></div>
<div class="w" style="left:1245px;top:933px;width:1px;height:3px"></div>
<div class="w" style="left:1251px;top:933px;width:1px;height:3px"></div>
<div class="w" style="left:1257px;top:933px;width:1px;height:3px"></div>
<div class="w" style="left:1264px;top:933px;width:1px;height:3px"></div>
<div class="w" style="left:1270px;top:933px;width:1px;height:3px"></div>
<div class="w" style="left:1276px;top:933px;width:1px;height:3px"></div>
<div class="w" style="left:1283px;top:933px;width:1px;height:3px"></div>
<div class="w" style="left:1289px;top:933px;width:1px;height:3px"></div>
<div class="w" style="left:1296px;top:933px;width:1px;height:3px"></div>
<div class="w" style="left:1302px;top:933px;width:1px;height:3px"></div>
<div class="w" style="left:1308px;top:933px;width:1px;height:3px"></div>
<div class="w" style="left:1315px;top:933px;width:1px;height:5px"></div>
<div class="w" style="left:1321px;top:933px;width:1px;height:3px"></div>
<div class="w" style="left:1327px;top:933px;width:1px;height:3px"></div>
<div class="w" style="left:1334px;top:933px;width:1px;height:3px"></div>
<div class="w" style="left:1340px;top:933px;width:1px;height:3px"></div>
<div class="w" style="left:1346px;top:933px;width:1px;height:3px"></div>
<div class="w" style="left:1353px;top:933px;width:1px;height:3px"></div>
<div class="w" style="left:1359px;top:933px;width:1px;height:3px"></div>
<div class="w" style="left:1366px;top:933px;width:1px;height:3px"></div>
<div class="w" style="left:1372px;top:933px;width:1px;height:3px"></div>
<div class="w" style="left:1378px;top:933px;width:1px;height:3px"></div>
<div class="w" style="left:1385px;top:933px;width:1px;height:3px"></div>
<div class="w" style="left:1391px;top:933px;width:1px;height:5px"></div>
<div class="w" style="left:1397px;top:933px;width:1px;height:3px"></div>
<div class="w" style="left:1404px;top:933px;width:1px;height:3px"></div>
<div class="w" style="left:1410px;top:933px;width:1px;height:3px"></div>
<div class="w" style="left:1416px;top:933px;width:1px;height:3px"></div>
<div class="w" style="left:1423px;top:933px;width:1px;height:3px"></div>
<div class="w" style="left:1429px;top:933px;width:1px;height:3px"></div>
<div class="w" style="left:1436px;top:933px;width:1px;height:3px"></div>
<div class="w" style="left:1442px;top:933px;width:1px;height:3px"></div>
<div class="w" style="left:1448px;top:933px;width:1px;height:3px"></div>
<div class="w" style="left:1455px;top:933px;width:1px;height:3px"></div>
<div class="w" style="left:1461px;top:933px;width:1px;height:3px"></div>
<div class="w" style="left:1467px;top:933px;width:1px;height:5px"></div>
<div class="w" style="left:1474px;top:933px;width:1px;height:3px"></div>
<div class="w" style="left:1480px;top:933px;width:1px;height:3px"></div>
<div class="w" style="left:1487px;top:933px;width:1px;height:3px"></div>
<div class="w" style="left:1493px;top:933px;width:1px;height:3px"></div>
<div class="w" style="left:1499px;top:933px;width:1px;height:3px"></div>
<div class="w" style="left:1506px;top:933px;width:1px;height:3px"></div>
<div class="w" style="left:1512px;top:933px;width:1px;height:3px"></div>
<div class="w" style="left:1518px;top:933px;width:1px;height:3px"></div>
<div class="w" style="left:1525px;top:933px;width:1px;height:3px"></div>
<div class="w" style="left:1531px;top:933px;width:1px;height:3px"></div>
<div class="w" style="left:1537px;top:933px;width:1px;height:3px"></div>
<div class="w" style="left:1544px;top:933px;width:1px;height:5px"></div>
<div class="w" style="left:1550px;top:933px;width:1px;height:3px"></div>
<div class="w" style="left:1557px;top:933px;width:1px;height:3px"></div>
<div class="w" style="left:1563px;top:933px;width:1px;height:3px"></div>
<div class="w" style="left:1569px;top:933px;width:1px;height:3px"></div>
<div class="w" style="left:1576px;top:933px;width:1px;height:3px"></div>
<div class="w" style="left:1582px;top:933px;width:1px;height:3px"></div>
<div class="w" style="left:1588px;top:933px;width:1px;height:3px"></div>
<div class="w" style="left:1595px;top:933px;width:1px;height:3px"></div>
<div class="w" style="left:1601px;top:933px;width:1px;height:3px"></div>
<div class="w" style="left:1607px;top:933px;width:1px;height:3px"></div>
<div class="w" style="left:1614px;top:933px;width:1px;height:3px"></div>
<div class="w" style="left:1620px;top:933px;width:1px;height:5px"></div>
<div class="w" style="left:1627px;top:933px;width:1px;height:3px"></div>
<div class="w" style="left:1633px;top:933px;width:1px;height:3px"></div>
<div class="w" style="left:1639px;top:933px;width:1px;height:3px"></div>
<div class="w" style="left:1646px;top:933px;width:1px;height:3px"></div>
<div class="w" style="left:1652px;top:933px;width:1px;height:3px"></div>
<div class="w" style="left:1658px;top:933px;width:1px;height:3px"></div>
<div class="w" style="left:1665px;top:933px;width:1px;height:3px"></div>
<div class="w" style="left:1671px;top:933px;width:1px;height:3px"></div>
<div class="w" style="left:1677px;top:933px;width:1px;height:3px"></div>
<div class="w" style="left:1684px;top:933px;width:1px;height:3px"></div>
<div class="w" style="left:1690px;top:933px;width:1px;height:3px"></div>
<div class="w" style="left:1697px;top:933px;width:1px;height:5px"></div>
<div class="w" style="left:1703px;top:933px;width:1px;height:3px"></div>
<div class="w" style="left:1709px;top:933px;width:1px;height:3px"></div>
<div class="w" style="left:1716px;top:933px;width:1px;height:3px"></div>
<div class="w" style="left:1722px;top:933px;width:1px;height:3px"></div>
<div class="w" style="left:1728px;top:933px;width:1px;height:3px"></div>
<div class="w" style="left:1735px;top:933px;width:1px;height:3px"></div>
<div class="w" style="left:1741px;top:933px;width:1px;height:3px"></div>
<div class="w" style="left:1747px;top:933px;width:1px;height:3px"></div>
<div class="w" style="left:1754px;top:933px;width:1px;height:3px"></div>
<div class="w" style="left:1760px;top:933px;width:1px;height:3px"></div>
<div class="w" style="left:1767px;top:933px;width:1px;height:3px"></div>
<div class="w" style="left:1773px;top:933px;width:1px;height:5px"></div>
<div class="w" style="left:1779px;top:933px;width:1px;height:3px"></div>
<div class="w" style="left:1786px;top:933px;width:1px;height:3px"></div>
<div class="w" style="left:1792px;top:933px;width:1px;height:3px"></div>
<div class="w" style="left:1798px;top:933px;width:1px;height:3px"></div>
<div class="w" style="left:52px;top:933px;width:1px;height:5px"></div>
<div class="w" style="left:1803px;top:933px;width:1px;height:5px"></div>
<div class="t" style="left:20.47px;top:939px;transform:scaleX(0.9794)">12:07:19.553</div>
<div class="t" style="left:24.85px;top:951px;transform:scaleX(0.9764)">03/26/2026</div>
<div class="t" style="left:137.70px;top:939px;transform:scaleX(0.9794)">12:15:00.000</div>
<div class="t" style="left:142.08px;top:951px;transform:scaleX(0.9764)">03/26/2026</div>
<div class="t" style="left:214.08px;top:939px;transform:scaleX(0.9794)">12:20:00.000</div>
<div class="t" style="left:218.46px;top:951px;transform:scaleX(0.9764)">03/26/2026</div>
<div class="t" style="left:290.46px;top:939px;transform:scaleX(0.9794)">12:25:00.000</div>
<div class="t" style="left:294.84px;top:951px;transform:scaleX(0.9764)">03/26/2026</div>
<div class="t" style="left:366.85px;top:939px;transform:scaleX(0.9794)">12:30:00.000</div>
<div class="t" style="left:371.22px;top:951px;transform:scaleX(0.9764)">03/26/2026</div>
<div class="t" style="left:443.23px;top:939px;transform:scaleX(0.9794)">12:35:00.000</div>
<div class="t" style="left:447.61px;top:951px;transform:scaleX(0.9764)">03/26/2026</div>
<div class="t" style="left:519.61px;top:939px;transform:scaleX(0.9794)">12:40:00.000</div>
<div class="t" style="left:523.99px;top:951px;transform:scaleX(0.9764)">03/26/2026</div>
<div class="t" style="left:595.99px;top:939px;transform:scaleX(0.9794)">12:45:00.000</div>
<div class="t" style="left:600.37px;top:951px;transform:scaleX(0.9764)">03/26/2026</div>
<div class="t" style="left:672.37px;top:939px;transform:scaleX(0.9794)">12:50:00.000</div>
<div class="t" style="left:676.75px;top:951px;transform:scaleX(0.9764)">03/26/2026</div>
<div class="t" style="left:748.75px;top:939px;transform:scaleX(0.9794)">12:55:00.000</div>
<div class="t" style="left:753.13px;top:951px;transform:scaleX(0.9764)">03/26/2026</div>
<div class="t" style="left:825.13px;top:939px;transform:scaleX(0.9794)">13:00:00.000</div>
<div class="t" style="left:829.51px;top:951px;transform:scaleX(0.9764)">03/26/2026</div>
<div class="t" style="left:901.51px;top:939px;transform:scaleX(0.9794)">13:05:00.000</div>
<div class="t" style="left:905.89px;top:951px;transform:scaleX(0.9764)">03/26/2026</div>
<div class="t" style="left:977.89px;top:939px;transform:scaleX(0.9794)">13:10:00.000</div>
<div class="t" style="left:982.27px;top:951px;transform:scaleX(0.9764)">03/26/2026</div>
<div class="t" style="left:1054.28px;top:939px;transform:scaleX(0.9794)">13:15:00.000</div>
<div class="t" style="left:1058.66px;top:951px;transform:scaleX(0.9764)">03/26/2026</div>
<div class="t" style="left:1130.66px;top:939px;transform:scaleX(0.9794)">13:20:00.000</div>
<div class="t" style="left:1135.04px;top:951px;transform:scaleX(0.9764)">03/26/2026</div>
<div class="t" style="left:1207.04px;top:939px;transform:scaleX(0.9794)">13:25:00.000</div>
<div class="t" style="left:1211.42px;top:951px;transform:scaleX(0.9764)">03/26/2026</div>
<div class="t" style="left:1283.42px;top:939px;transform:scaleX(0.9794)">13:30:00.000</div>
<div class="t" style="left:1287.80px;top:951px;transform:scaleX(0.9764)">03/26/2026</div>
<div class="t" style="left:1359.80px;top:939px;transform:scaleX(0.9794)">13:35:00.000</div>
<div class="t" style="left:1364.18px;top:951px;transform:scaleX(0.9764)">03/26/2026</div>
<div class="t" style="left:1436.18px;top:939px;transform:scaleX(0.9794)">13:40:00.000</div>
<div class="t" style="left:1440.56px;top:951px;transform:scaleX(0.9764)">03/26/2026</div>
<div class="t" style="left:1512.56px;top:939px;transform:scaleX(0.9794)">13:45:00.000</div>
<div class="t" style="left:1516.94px;top:951px;transform:scaleX(0.9764)">03/26/2026</div>
<div class="t" style="left:1588.94px;top:939px;transform:scaleX(0.9794)">13:50:00.000</div>
<div class="t" style="left:1593.32px;top:951px;transform:scaleX(0.9764)">03/26/2026</div>
<div class="t" style="left:1665.32px;top:939px;transform:scaleX(0.9794)">13:55:00.000</div>
<div class="t" style="left:1669.70px;top:951px;transform:scaleX(0.9764)">03/26/2026</div>
<div class="t" style="left:1772.47px;top:939px;transform:scaleX(0.9794)">14:02:00.833</div>
<div class="t" style="left:1776.85px;top:951px;transform:scaleX(0.9764)">03/26/2026</div>
<div class="t" style="left:915.40px;top:965px;transform:scaleX(0.7833)">Time</div>
<div class="a" style="left:1841px;top:74px;width:18px;height:3px;background:#e85890"></div>
<div class="a" style="left:1841px;top:79px;width:18px;height:856px;background:linear-gradient(to bottom,#e0006e 0%,#e0106a 6.5%,#e01850 11.8%,#e82a30 14.1%,#e85020 21%,#f07020 25.8%,#f08818 32.8%,#f8b008 38.7%,#f0e020 40.8%,#d8dc30 45.7%,#b8d038 50%,#78b840 58%,#40a048 62.3%,#30a070 67.9%,#20a8a0 74.9%,#18b0c8 79.6%,#1880b8 83%,#283878 100%)"></div>
<div class="a" style="left:1841px;top:937px;width:18px;height:3px;background:#fff"></div>
<div class="t" style="left:1867.84px;top:74px;transform:scaleX(1.0125)">-5.00</div>
<div class="t" style="left:1867.84px;top:502px;transform:scaleX(1.0083)">-9.00</div>
<div class="t" style="left:1867.84px;top:930px;transform:scaleX(1.0067)">-13.00</div>
<div class="t" style="left:1846px;top:503px;width:130px;text-align:center;transform:rotate(90deg);transform-origin:50% 50%">Amplitude(Log10(g^2/Hz))</div>
<div class="a" style="left:52px;top:70px;width:1752px;height:861px;overflow:hidden"><div class="a" style="left:0;top:0;width:1752px;height:861px;background:linear-gradient(to bottom,#93cc28 -0.04%,#95cc26 2.06%,#a3d024 4.05%,#a3d024 6.05%,#9bcc28 8.05%,#8bc42c 9.30%,#73bc32 10.55%,#6bba34 13.04%,#63b434 16.04%,#53ac34 19.04%,#4ba634 21.53%,#51aa34 24.53%,#5bb034 27.03%,#6bb632 28.52%,#93c828 31.02%,#9bcc26 33.52%,#9bca28 36.02%,#a3cc24 38.01%,#a3cc24 39.51%,#abd024 41.01%,#b3d424 43.51%,#cbd020 46.00%,#dbc810 48.00%,#e3bc0c 50.00%,#e3b80c 51.50%,#e3c410 53.50%,#dfc810 55.49%,#d3cc14 57.49%,#b7cc20 59.49%,#a3cc20 61.49%,#93c428 63.98%,#83c02c 65.98%,#7fc02c 67.98%,#7bbc2e 69.23%,#57ac3c 70.23%,#50a844 71.48%,#4ca444 73.47%,#40a050 74.97%,#389c58 76.22%,#30a060 77.47%,#28a078 79.47%,#22a890 81.46%,#28a880 82.96%,#30a078 83.71%,#2a9c68 84.46%,#2a9c68 85.96%,#48a850 87.46%,#2ca078 88.95%,#40a050 90.45%,#38a068 91.45%,#58a848 92.45%,#a0cc30 93.45%,#70b840 94.20%,#30a078 94.95%,#60b040 95.70%,#90c438 96.45%,#50a860 96.95%,#22a090 97.44%,#20a090 98.94%,#b8d828 99.34%,#b8d828 100.04%)"></div><div class="a" style="left:0;top:135px;width:1752px;height:105px;background:linear-gradient(to right,rgba(30,125,45,0.12) 0.00%,rgba(30,125,45,0.16) 8.45%,rgba(30,125,45,0.0) 15.87%,rgba(30,125,45,0.0) 29.00%,rgba(30,125,45,0.22) 33.56%,rgba(30,125,45,0.18) 41.04%,rgba(30,125,45,0.14) 42.12%,rgba(30,125,45,0.0) 54.11%,rgba(30,125,45,0.05) 64.38%,rgba(30,125,45,0.2) 70.09%,rgba(30,125,45,0.2) 73.80%,rgba(30,125,45,0.22) 89.73%,rgba(30,125,45,0.22) 100.00%);-webkit-mask-image:linear-gradient(to bottom,transparent,#000 35%,#000 65%,transparent);mask-image:linear-gradient(to bottom,transparent,#000 35%,#000 65%,transparent)"></div><div class="a" style="left:0;top:135px;width:1752px;height:105px;background:linear-gradient(to right,rgba(170,215,60,0) 0.00%,rgba(170,215,60,0) 14.16%,rgba(170,215,60,0.14) 21.00%,rgba(170,215,60,0.1) 26.71%,rgba(170,215,60,0) 31.28%,rgba(170,215,60,0) 51.83%,rgba(170,215,60,0.12) 58.68%,rgba(170,215,60,0) 63.24%,rgba(170,215,60,0) 100.00%);-webkit-mask-image:linear-gradient(to bottom,transparent,#000 35%,#000 65%,transparent);mask-image:linear-gradient(to bottom,transparent,#000 35%,#000 65%,transparent)"></div><div class="a" style="left:0;top:834px;width:1752px;height:22px;background:linear-gradient(to right,rgba(30,90,190,0.14) 0.00%,rgba(30,90,190,0.14) 41.04%,rgba(30,90,190,0.16) 42.12%,rgba(30,90,190,0.16) 67.24%,rgba(30,90,190,0.32) 68.38%,rgba(30,90,190,0.32) 73.80%,rgba(30,90,190,0.3) 89.73%,rgba(30,90,190,0.3) 100.00%);-webkit-mask-image:linear-gradient(to bottom,transparent,#000 35%,#000 65%,transparent);mask-image:linear-gradient(to bottom,transparent,#000 35%,#000 65%,transparent)"></div><div class="a" style="left:0;top:796px;width:1752px;height:26px;background:linear-gradient(to right,rgba(200,225,50,0) 0.00%,rgba(200,225,50,0) 73.52%,rgba(200,225,50,0.28) 89.73%,rgba(200,225,50,0.28) 100.00%);-webkit-mask-image:linear-gradient(to bottom,transparent,#000 35%,#000 65%,transparent);mask-image:linear-gradient(to bottom,transparent,#000 35%,#000 65%,transparent)"></div><div class="a" style="left:0;top:742px;width:1752px;height:22px;background:linear-gradient(to right,rgba(200,225,50,0) 0.00%,rgba(200,225,50,0) 73.52%,rgba(200,225,50,0.12) 89.73%,rgba(200,225,50,0.12) 100.00%);-webkit-mask-image:linear-gradient(to bottom,transparent,#000 35%,#000 65%,transparent);mask-image:linear-gradient(to bottom,transparent,#000 35%,#000 65%,transparent)"></div><div class="a" style="left:13px;top:44px;width:1739px;height:1px;background:rgba(220,230,40,.35)"></div><div class="a" style="left:0px;top:127px;width:1752px;height:1px;background:rgba(210,220,50,.45)"></div><div class="a" style="left:48px;top:192px;width:557px;height:1px;background:rgba(200,220,60,.5)"></div><div class="a" style="left:738px;top:192px;width:555px;height:1px;background:rgba(200,220,60,.45)"></div><div class="a" style="left:1572px;top:192px;width:180px;height:1px;background:rgba(200,220,60,.45)"></div><div class="a" style="left:0px;top:238px;width:1752px;height:1px;background:rgba(200,220,60,.45)"></div><div class="a" style="left:0px;top:466px;width:1752px;height:1px;background:rgba(240,130,30,.45)"></div><div class="a" style="left:0px;top:499px;width:1752px;height:1px;background:rgba(240,130,30,.45)"></div><div class="a" style="left:0px;top:637px;width:1752px;height:2px;background:rgba(200,225,50,.45)"></div><div class="a" style="left:0px;top:644px;width:1752px;height:1px;background:rgba(200,225,50,.6)"></div><div class="a" style="left:0px;top:782px;width:1752px;height:1px;background:rgba(200,220,60,.35)"></div><div class="a" style="left:0px;top:84px;width:1752px;height:5px;background:rgba(240,200,40,.7)"></div><div class="a" style="left:0px;top:85px;width:1752px;height:3px;background:#f07818"></div><div class="a" style="left:0px;top:250px;width:1752px;height:2px;background:#e8e020"></div><div class="a" style="left:0px;top:259px;width:408px;height:5px;background:rgba(240,215,40,.6)"></div><div class="a" style="left:0px;top:260px;width:408px;height:3px;background:#f08818"></div><div class="a" style="left:445px;top:259px;width:330px;height:5px;background:rgba(240,215,40,.6)"></div><div class="a" style="left:445px;top:260px;width:330px;height:3px;background:#f08818"></div><div class="a" style="left:777px;top:259px;width:354px;height:5px;background:rgba(240,215,40,.6)"></div><div class="a" style="left:777px;top:260px;width:354px;height:3px;background:#f08818"></div><div class="a" style="left:1170px;top:259px;width:582px;height:5px;background:rgba(240,215,40,.6)"></div><div class="a" style="left:1170px;top:260px;width:582px;height:3px;background:#f08818"></div><div class="a" style="left:0px;top:302px;width:1752px;height:5px;background:rgba(235,225,40,.85)"></div><div class="a" style="left:0px;top:303px;width:1752px;height:3px;background:#f0c020"></div><div class="a" style="left:0px;top:342px;width:1752px;height:5px;background:rgba(240,150,30,.85)"></div><div class="a" style="left:0px;top:343px;width:1752px;height:3px;background:#e83018"></div><div class="a" style="left:0px;top:447px;width:1752px;height:6px;background:rgba(240,140,30,.35)"></div><div class="a" style="left:0px;top:448px;width:1752px;height:4px;background:#e03020"></div><div class="a" style="left:0px;top:558px;width:409px;height:6px;background:rgba(240,220,40,.9)"></div><div class="a" style="left:0px;top:560px;width:409px;height:3px;background:#e03030"></div><div class="a" style="left:445px;top:558px;width:687px;height:6px;background:rgba(240,220,40,.9)"></div><div class="a" style="left:445px;top:560px;width:687px;height:3px;background:#e03030"></div><div class="a" style="left:1170px;top:558px;width:582px;height:6px;background:rgba(240,220,40,.9)"></div><div class="a" style="left:1170px;top:560px;width:582px;height:3px;background:#e03030"></div><div class="a" style="left:0px;top:587px;width:1752px;height:5px;background:rgba(220,225,50,.3)"></div><div class="a" style="left:0px;top:588px;width:1752px;height:3px;background:#e8e020"></div><div class="a" style="left:0px;top:600px;width:1752px;height:6px;background:rgba(240,220,40,.95)"></div><div class="a" style="left:0px;top:601px;width:1752px;height:3px;background:#e01848"></div><div class="a" style="left:0px;top:656px;width:1752px;height:2px;background:rgba(200,225,50,.8)"></div><div class="a" style="left:0px;top:721px;width:1752px;height:6px;background:rgba(200,220,50,.35)"></div><div class="a" style="left:0px;top:722px;width:1752px;height:4px;background:#e4ec20"></div><div class="a" style="left:0px;top:791px;width:1752px;height:4px;background:rgba(200,220,50,.5)"></div><div class="a" style="left:0px;top:792px;width:1752px;height:2px;background:#e0e020"></div><div class="a" style="left:0px;top:857px;width:1752px;height:3px;background:rgba(200,215,50,.8)"></div><div class="a" style="left:373px;top:0px;width:1px;height:861px;background:rgba(220,230,50,.45)"></div><div class="a" style="left:411px;top:520px;width:1px;height:210px;background:rgba(220,230,50,.35)"></div><div class="a" style="left:184px;top:606px;width:1px;height:30px;background:rgba(220,230,50,.5)"></div><div class="a" style="left:553px;top:0px;width:1px;height:861px;background:rgba(220,230,50,.2)"></div><div class="a" style="left:521px;top:0;width:1px;height:861px;background:linear-gradient(to bottom,rgba(230,210,40,.8) 0%,rgba(230,200,40,.8) 20%,rgba(230,120,30,.85) 35%,rgba(225,50,30,.9) 47%,rgba(225,60,30,.9) 58%,rgba(230,150,40,.8) 63%,rgba(230,215,40,.75) 70%,rgba(230,220,40,.75) 100%)"></div><div class="a" style="left:1071px;top:0px;width:1px;height:861px;background:rgba(220,230,50,.3)"></div><div class="a" style="left:1071px;top:395px;width:1px;height:95px;background:rgba(230,80,30,.55)"></div><div class="a" style="left:1109px;top:0px;width:1px;height:360px;background:rgba(230,110,30,.75)"></div><div class="a" style="left:1109px;top:360px;width:1px;height:135px;background:rgba(225,50,30,.9)"></div><div class="a" style="left:1108px;top:360px;width:1px;height:135px;background:rgba(225,90,40,.5)"></div><div class="a" style="left:1109px;top:495px;width:1px;height:75px;background:rgba(235,130,30,.8)"></div><div class="a" style="left:1109px;top:570px;width:1px;height:291px;background:rgba(225,225,40,.7)"></div><div class="a" style="left:16px;top:727px;width:2px;height:129px;background:rgba(205,222,50,0.56)"></div><div class="a" style="left:22px;top:727px;width:2px;height:129px;background:rgba(205,222,50,0.45)"></div><div class="a" style="left:24px;top:727px;width:2px;height:129px;background:rgba(205,222,50,0.52)"></div><div class="a" style="left:30px;top:727px;width:1px;height:129px;background:rgba(205,222,50,0.38)"></div><div class="a" style="left:34px;top:727px;width:1px;height:129px;background:rgba(205,222,50,0.22)"></div><div class="a" style="left:39px;top:727px;width:1px;height:129px;background:rgba(205,222,50,0.38)"></div><div class="a" style="left:55px;top:727px;width:1px;height:129px;background:rgba(205,222,50,0.56)"></div><div class="a" style="left:61px;top:727px;width:1px;height:129px;background:rgba(205,222,50,0.22)"></div><div class="a" style="left:73px;top:727px;width:1px;height:129px;background:rgba(205,222,50,0.56)"></div><div class="a" style="left:91px;top:727px;width:1px;height:129px;background:rgba(205,222,50,0.22)"></div><div class="a" style="left:109px;top:727px;width:1px;height:129px;background:rgba(205,222,50,0.56)"></div><div class="a" style="left:118px;top:727px;width:1px;height:129px;background:rgba(205,222,50,0.22)"></div><div class="a" style="left:136px;top:727px;width:1px;height:129px;background:rgba(205,222,50,0.38)"></div><div class="a" style="left:156px;top:727px;width:2px;height:129px;background:rgba(205,222,50,0.60)"></div><div class="a" style="left:159px;top:727px;width:2px;height:129px;background:rgba(205,222,50,0.52)"></div><div class="a" style="left:176px;top:727px;width:1px;height:129px;background:rgba(205,222,50,0.38)"></div><div class="a" style="left:188px;top:727px;width:1px;height:129px;background:rgba(205,222,50,0.56)"></div><div class="a" style="left:196px;top:727px;width:1px;height:129px;background:rgba(205,222,50,0.56)"></div><div class="a" style="left:208px;top:727px;width:1px;height:129px;background:rgba(205,222,50,0.38)"></div><div class="a" style="left:227px;top:727px;width:1px;height:129px;background:rgba(205,222,50,0.56)"></div><div class="a" style="left:233px;top:727px;width:1px;height:129px;background:rgba(205,222,50,0.38)"></div><div class="a" style="left:239px;top:727px;width:2px;height:129px;background:rgba(205,222,50,0.56)"></div><div class="a" style="left:329px;top:727px;width:1px;height:129px;background:rgba(205,222,50,0.22)"></div><div class="a" style="left:352px;top:727px;width:1px;height:129px;background:rgba(205,222,50,0.34)"></div><div class="a" style="left:386px;top:727px;width:1px;height:129px;background:rgba(205,222,50,0.22)"></div><div class="a" style="left:389px;top:727px;width:1px;height:129px;background:rgba(205,222,50,0.22)"></div><div class="a" style="left:425px;top:727px;width:1px;height:129px;background:rgba(205,222,50,0.22)"></div><div class="a" style="left:531px;top:775px;width:2px;height:81px;background:rgba(205,222,50,0.56)"></div><div class="a" style="left:554px;top:727px;width:2px;height:129px;background:rgba(205,222,50,0.56)"></div><div class="a" style="left:566px;top:727px;width:1px;height:129px;background:rgba(205,222,50,0.22)"></div><div class="a" style="left:584px;top:727px;width:1px;height:129px;background:rgba(205,222,50,0.38)"></div><div class="a" style="left:595px;top:727px;width:2px;height:129px;background:rgba(205,222,50,0.60)"></div><div class="a" style="left:605px;top:727px;width:1px;height:129px;background:rgba(205,222,50,0.52)"></div><div class="a" style="left:623px;top:727px;width:1px;height:129px;background:rgba(205,222,50,0.38)"></div><div class="a" style="left:641px;top:727px;width:1px;height:129px;background:rgba(205,222,50,0.38)"></div><div class="a" style="left:656px;top:727px;width:2px;height:129px;background:rgba(205,222,50,0.56)"></div><div class="a" style="left:674px;top:727px;width:1px;height:129px;background:rgba(205,222,50,0.38)"></div><div class="a" style="left:679px;top:727px;width:1px;height:129px;background:rgba(205,222,50,0.56)"></div><div class="a" style="left:685px;top:727px;width:1px;height:129px;background:rgba(205,222,50,0.38)"></div><div class="a" style="left:709px;top:727px;width:2px;height:129px;background:rgba(205,222,50,0.56)"></div><div class="a" style="left:712px;top:727px;width:1px;height:129px;background:rgba(205,222,50,0.38)"></div><div class="a" style="left:743px;top:727px;width:1px;height:129px;background:rgba(205,222,50,0.56)"></div><div class="a" style="left:766px;top:727px;width:1px;height:129px;background:rgba(205,222,50,0.38)"></div><div class="a" style="left:779px;top:727px;width:2px;height:129px;background:rgba(205,222,50,0.56)"></div><div class="a" style="left:786px;top:727px;width:1px;height:129px;background:rgba(205,222,50,0.56)"></div><div class="a" style="left:801px;top:727px;width:1px;height:129px;background:rgba(205,222,50,0.38)"></div><div class="a" style="left:824px;top:727px;width:2px;height:129px;background:rgba(205,222,50,0.56)"></div><div class="a" style="left:826px;top:727px;width:1px;height:129px;background:rgba(205,222,50,0.38)"></div><div class="a" style="left:853px;top:727px;width:1px;height:129px;background:rgba(205,222,50,0.38)"></div><div class="a" style="left:864px;top:727px;width:1px;height:129px;background:rgba(205,222,50,0.56)"></div><div class="a" style="left:890px;top:727px;width:1px;height:129px;background:rgba(205,222,50,0.56)"></div><div class="a" style="left:907px;top:727px;width:1px;height:129px;background:rgba(205,222,50,0.38)"></div><div class="a" style="left:942px;top:727px;width:1px;height:129px;background:rgba(205,222,50,0.38)"></div><div class="a" style="left:966px;top:727px;width:1px;height:129px;background:rgba(205,222,50,0.56)"></div><div class="a" style="left:974px;top:760px;width:2px;height:96px;background:rgba(205,222,50,0.45)"></div><div class="a" style="left:1025px;top:727px;width:1px;height:129px;background:rgba(205,222,50,0.56)"></div><div class="a" style="left:1051px;top:727px;width:1px;height:129px;background:rgba(205,222,50,0.56)"></div><div class="a" style="left:1063px;top:727px;width:1px;height:129px;background:rgba(205,222,50,0.56)"></div><div class="a" style="left:1090px;top:727px;width:1px;height:129px;background:rgba(205,222,50,0.38)"></div><div class="a" style="left:1104px;top:727px;width:1px;height:129px;background:rgba(205,222,50,0.38)"></div><div class="a" style="left:1154px;top:727px;width:2px;height:129px;background:rgba(205,222,50,0.56)"></div><div class="a" style="left:1158px;top:727px;width:1px;height:129px;background:rgba(205,222,50,0.56)"></div><div class="a" style="left:1172px;top:727px;width:1px;height:129px;background:rgba(205,222,50,0.38)"></div><div class="a" style="left:1181px;top:727px;width:1px;height:129px;background:rgba(205,222,50,0.38)"></div><div class="a" style="left:1278px;top:727px;width:1px;height:129px;background:rgba(205,222,50,0.56)"></div><div class="a" style="left:1067px;top:791px;width:17px;height:2px;background:#e85020"></div><div class="a" style="left:1067px;top:741px;width:21px;height:1px;background:rgba(220,230,50,.7)"></div><div class="a" style="left:1114px;top:761px;width:13px;height:2px;background:rgba(230,235,40,.9)"></div><div class="a" style="left:1109px;top:789px;width:18px;height:2px;background:rgba(230,235,40,.9)"></div><div class="a" style="left:136px;top:160px;width:1px;height:70px;background:rgba(220,230,50,.6)"></div><div class="a" style="left:347px;top:760px;width:13px;height:2px;background:rgba(225,232,40,.85)"></div><div class="a" style="left:1132px;top:551px;width:1px;height:19px;background:rgba(225,232,40,.7)"></div><div class="a" style="left:1132px;top:635px;width:1px;height:11px;background:rgba(225,232,40,.7)"></div><div class="a" style="left:437px;top:250px;width:1px;height:14px;background:rgba(225,232,40,.7)"></div><div class="a" style="left:1278px;top:606px;width:1px;height:121px;background:rgba(220,230,50,.35)"></div><div class="a" style="left:1071px;top:671px;width:2px;height:51px;background:rgba(230,170,40,.55)"></div><div class="a" style="left:1068px;top:532px;width:15px;height:1px;background:rgba(225,232,40,.6)"></div><div class="a" style="left:1067px;top:671px;width:16px;height:2px;background:rgba(225,232,40,.7)"></div><svg class="a" style="left:0;top:0" width="1752" height="861"><line x1="444.5" y1="531" x2="411" y2="648" stroke="#e87020" stroke-width="2" stroke-dasharray="4 1.5"/><line x1="1170" y1="532" x2="1135" y2="646" stroke="#e87020" stroke-width="2" stroke-dasharray="4 1.5"/><line x1="775.5" y1="542" x2="778.5" y2="557" stroke="#e85020" stroke-width="3.5"/></svg><div class="a" style="left:719px;top:0;width:19px;height:861px;background:#fff"></div><div class="a" style="left:1293px;top:0;width:279px;height:861px;background:#fff"></div></div></body></html>
